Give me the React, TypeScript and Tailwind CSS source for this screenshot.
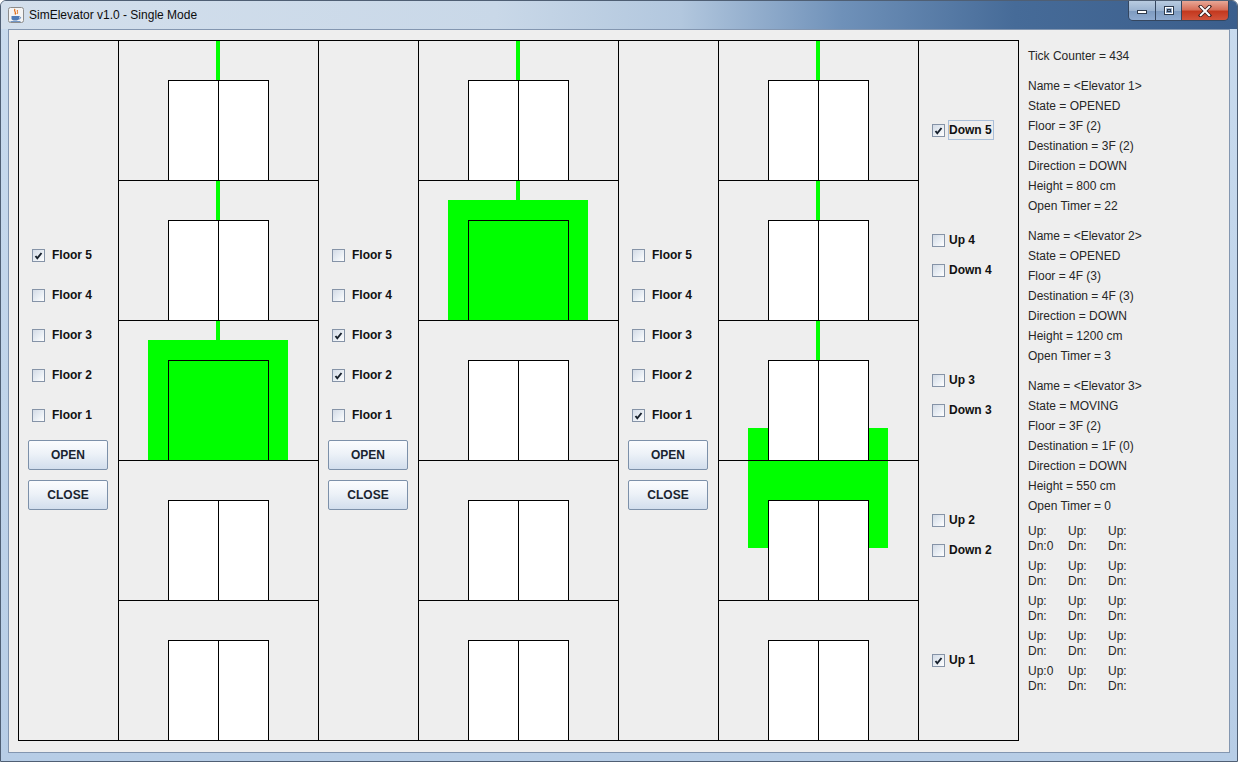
import React from "react";

type Elev = { height: number; open: boolean; floorFromTop: number };

const elevators: Elev[] = [
  { height: 800, open: true, floorFromTop: 2 },
  { height: 1200, open: true, floorFromTop: 1 },
  { height: 550, open: false, floorFromTop: -1 },
];

const panelChecks: number[][] = [[5], [3, 2], [1]];

const infos: string[][] = [
  [
    "Name = <Elevator 1>",
    "State = OPENED",
    "Floor = 3F (2)",
    "Destination = 3F (2)",
    "Direction = DOWN",
    "Height = 800 cm",
    "Open Timer = 22",
  ],
  [
    "Name = <Elevator 2>",
    "State = OPENED",
    "Floor = 4F (3)",
    "Destination = 4F (3)",
    "Direction = DOWN",
    "Height = 1200 cm",
    "Open Timer = 3",
  ],
  [
    "Name = <Elevator 3>",
    "State = MOVING",
    "Floor = 3F (2)",
    "Destination = 1F (0)",
    "Direction = DOWN",
    "Height = 550 cm",
    "Open Timer = 0",
  ],
];

const upDn: [string[], string[]][] = [
  [["Up:", "Up:", "Up:"], ["Dn:0", "Dn:", "Dn:"]],
  [["Up:", "Up:", "Up:"], ["Dn:", "Dn:", "Dn:"]],
  [["Up:", "Up:", "Up:"], ["Dn:", "Dn:", "Dn:"]],
  [["Up:", "Up:", "Up:"], ["Dn:", "Dn:", "Dn:"]],
  [["Up:0", "Up:", "Up:"], ["Dn:", "Dn:", "Dn:"]],
];

function Check({ checked }: { checked: boolean }) {
  return (
    <span className="flex h-[13px] w-[13px] shrink-0 items-center justify-center border border-[#8593a7] bg-[linear-gradient(135deg,#d3dbe6_0%,#e9eef4_55%,#ffffff_100%)]">
      {checked && (
        <svg width="11" height="11" viewBox="0 0 11 11">
          <path d="M2.5 6 L4.3 8.3 L8.5 3" fill="none" stroke="#17202c" strokeWidth="1.9" />
        </svg>
      )}
    </span>
  );
}

function JButton({ label, className }: { label: string; className: string }) {
  return (
    <div
      className={`flex h-[30px] w-[80px] items-center justify-center rounded-[2px] border border-[#7c90a9] bg-[linear-gradient(180deg,#fbfcfe_0%,#edf2f8_45%,#d2deed_100%)] text-[12px] font-bold text-[#1b2430] ${className}`}
    >
      {label}
    </div>
  );
}

function CarPanel({ checks }: { checks: number[] }) {
  return (
    <div className="flex h-[700px] w-[100px] shrink-0 flex-col border-r border-b border-black pt-[194px]">
      {[5, 4, 3, 2, 1].map((f) => (
        <div key={f} className="flex h-[40px] items-center pl-[13px]">
          <Check checked={checks.includes(f)} />
          <span className="ml-[7px] text-[12px] font-bold text-[#111]">Floor {f}</span>
        </div>
      ))}
      <JButton label="OPEN" className="ml-[9px] mt-[5px]" />
      <JButton label="CLOSE" className="ml-[9px] mt-[10px]" />
    </div>
  );
}

function ShaftCell({ last, open }: { last: boolean; open: boolean }) {
  return (
    <div className={`flex flex-col justify-end ${last ? "h-[139px]" : "h-[140px] border-b border-black"}`}>
      {open ? (
        <div className="ml-[49px] h-[100px] w-[101px] border-l border-t border-r border-black" />
      ) : (
        <div className="ml-[49px] flex h-[100px] w-[101px] border-l border-t border-r border-black bg-white">
          <div className="w-[49px]" />
          <div className="flex-1 border-l border-black" />
        </div>
      )}
    </div>
  );
}

function Shaft({ e }: { e: Elev }) {
  const carTop = Math.ceil(579 - e.height * 0.35);
  return (
    <div className="relative h-[700px] w-[200px] shrink-0 border-r border-b border-black">
      <div className="absolute left-[97px] top-0 w-[4px] bg-[#00ff00]" style={{ height: carTop }} />
      <div className="absolute left-[29px] h-[120px] w-[140px] bg-[#00ff00]" style={{ top: carTop }} />
      <div className="relative flex flex-col">
        {[0, 1, 2, 3, 4].map((i) => (
          <ShaftCell key={i} last={i === 4} open={e.open && e.floorFromTop === i} />
        ))}
      </div>
    </div>
  );
}

function HallRow({ label, checked, focus }: { label: string; checked: boolean; focus?: boolean }) {
  return (
    <div className="flex h-[30px] items-center pl-[13px]">
      <Check checked={checked} />
      {focus ? (
        <span className="ml-[3px] h-[20px] border border-[#a9bed8] pr-[1px] text-[12px] font-bold leading-[18px] text-[#111]">
          {label}
        </span>
      ) : (
        <span className="ml-[4px] text-[12px] font-bold text-[#111]">{label}</span>
      )}
    </div>
  );
}

function HallPanel() {
  return (
    <div className="flex h-[700px] w-[100px] shrink-0 flex-col border-r border-b border-black">
      <div className="flex h-[140px] flex-col pt-[74px]">
        <HallRow label="Down 5" checked focus />
      </div>
      {[4, 3, 2].map((f) => (
        <div key={f} className="flex h-[140px] flex-col pt-[44px]">
          <HallRow label={`Up ${f}`} checked={false} />
          <HallRow label={`Down ${f}`} checked={false} />
        </div>
      ))}
      <div className="flex h-[139px] flex-col pt-[44px]">
        <HallRow label="Up 1" checked />
      </div>
    </div>
  );
}

function InfoPanel() {
  return (
    <div className="ml-[9px] flex flex-col pt-[6px] text-[12px] leading-[20px] text-[#262626]">
      <div>Tick Counter = 434</div>
      {infos.map((g, gi) => (
        <div key={gi} className="mt-[10px] flex flex-col">
          {g.map((l) => (
            <div key={l}>{l}</div>
          ))}
        </div>
      ))}
      <div className="mt-[8px] flex flex-col gap-[5px] leading-[15px]">
        {upDn.map(([u, d], i) => (
          <div key={i} className="flex flex-col">
            <div className="flex">
              {u.map((t, j) => (
                <span key={j} className="w-[40px]">{t}</span>
              ))}
            </div>
            <div className="flex">
              {d.map((t, j) => (
                <span key={j} className="w-[40px]">{t}</span>
              ))}
            </div>
          </div>
        ))}
      </div>
    </div>
  );
}

function JavaIcon() {
  return (
    <svg width="16" height="16" viewBox="0 0 16 16">
      <rect x="0.5" y="0.5" width="15" height="15" rx="2" fill="#f4f4f4" stroke="#8c8c8c" />
      <path d="M7 2 C5 4 9 5 7 7.5" fill="none" stroke="#e0701c" strokeWidth="1.3" />
      <path d="M9.5 3 C8.5 4.5 10.5 5 9 7" fill="none" stroke="#e0701c" strokeWidth="1" />
      <path d="M3.5 9 H11 V11.5 C11 13 9.5 13.5 7.2 13.5 C5 13.5 3.5 13 3.5 11.5 Z" fill="#4f7cb8" />
      <path d="M11 9.8 C13.2 9.6 13.2 11.8 10.8 12" fill="none" stroke="#4f7cb8" strokeWidth="1" />
      <path d="M2.5 14.5 H12.5" stroke="#4f7cb8" strokeWidth="0.8" />
    </svg>
  );
}

function WinButtons() {
  return (
    <div className="mr-[8px] flex h-[20px] overflow-hidden rounded-b-[5px] border border-t-0 border-[#34465f]">
      <div className="flex w-[27px] items-center justify-center border-r border-[#34465f] bg-[linear-gradient(180deg,#b8cbe0_0%,#9bb3d0_50%,#7d9abf_51%,#8fabd0_100%)]">
        <svg width="12" height="8" viewBox="0 0 12 8">
          <rect x="1.5" y="3.5" width="9" height="3" fill="#ffffff" stroke="#2d3a4c" />
        </svg>
      </div>
      <div className="flex w-[26px] items-center justify-center border-r border-[#34465f] bg-[linear-gradient(180deg,#b8cbe0_0%,#9bb3d0_50%,#7d9abf_51%,#8fabd0_100%)]">
        <svg width="12" height="11" viewBox="0 0 12 11">
          <rect x="1.5" y="1.5" width="9" height="8" fill="none" stroke="#2d3a4c" strokeWidth="1" />
          <rect x="2.5" y="2.5" width="7" height="6" fill="none" stroke="#ffffff" strokeWidth="1" />
          <rect x="4.5" y="4.5" width="3" height="2" fill="#7d9abf" stroke="#2d3a4c" strokeWidth="1" />
        </svg>
      </div>
      <div className="flex w-[46px] items-center justify-center bg-[linear-gradient(180deg,#e8a796_0%,#d7705a_45%,#c4391f_55%,#d2533b_100%)]">
        <svg width="14" height="12" viewBox="0 0 14 12">
          <path d="M2.5 1.5 L11.5 10.5 M11.5 1.5 L2.5 10.5" stroke="#3a2020" strokeWidth="3.6" strokeLinecap="square" />
          <path d="M2.8 1.8 L11.2 10.2 M11.2 1.8 L2.8 10.2" stroke="#ffffff" strokeWidth="2" strokeLinecap="square" />
        </svg>
      </div>
    </div>
  );
}

export default function App() {
  return (
    <div className="flex h-[762px] w-[1238px] flex-col overflow-hidden rounded-t-[6px] border border-[#4f5f74] bg-[linear-gradient(180deg,#c9dbee_0%,#b7cde6_100%)] font-['Liberation_Sans',Arial,sans-serif]">
      <div className="flex h-[28px] shrink-0 items-start justify-between bg-[linear-gradient(90deg,#d3dfec_0%,#c9d8e8_40%,#b2c7de_55%,#6f91b9_68%,#466b98_82%,#3b5e8c_100%)]">
        <div className="flex items-center pl-[7px] pt-[6px]">
          <JavaIcon />
          <span className="ml-[5px] text-[12px] leading-[16px] text-[#0d0d0d]">SimElevator v1.0 - Single Mode</span>
        </div>
        <WinButtons />
      </div>
      <div className="mx-[7px] mb-[8px] flex-1 border border-[#8396b0] bg-[#eeeeee] pl-[9px] pt-[10px]">
        <div className="flex items-start">
          <div className="flex border-l border-t border-black">
            <CarPanel checks={panelChecks[0]} />
            <Shaft e={elevators[0]} />
            <CarPanel checks={panelChecks[1]} />
            <Shaft e={elevators[1]} />
            <CarPanel checks={panelChecks[2]} />
            <Shaft e={elevators[2]} />
            <HallPanel />
          </div>
          <InfoPanel />
        </div>
      </div>
    </div>
  );
}
